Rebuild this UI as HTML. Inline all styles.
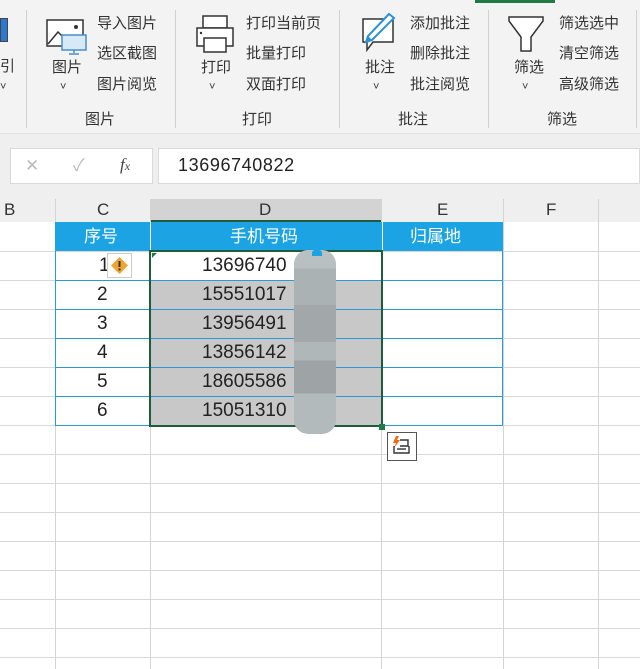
<!DOCTYPE html><html><head><meta charset="utf-8"><style>
*{margin:0;padding:0;box-sizing:border-box}
body{width:640px;height:669px;overflow:hidden;background:#fff;position:relative;font-family:"Liberation Sans","Noto Sans CJK SC",sans-serif;}
.a{position:absolute}
.t{position:absolute;font-size:15px;color:#333;white-space:nowrap;line-height:18px}
.sep{position:absolute;top:10px;width:1px;height:118px;background:#d0d0d0}
.vl{position:absolute;top:199px;bottom:0;width:1px;background:#d4d4d4}
.hl{position:absolute;left:0;right:0;height:1px;background:#d8d8d8}
.num{position:absolute;font-size:19px;color:#222;line-height:29px}
</style></head><body>
<div class="a" style="left:0;top:0;width:640px;height:133px;background:#f3f3f3"></div>
<div class="a" style="left:475px;top:0;width:80px;height:3px;background:#1e7b45"></div>
<div class="a" style="left:0;top:133px;width:640px;height:66px;background:#efefef;border-top:1px solid #e2e2e2"></div>
<div class="a" style="left:0;top:18px;width:8px;height:24px;background:#2b79d0;border:1px solid #444"></div>
<div class="t" style="left:0;top:58px">引</div>
<div class="t" style="left:0;top:78px;font-size:11px">˅</div>
<div class="sep" style="left:26px"></div>
<div class="sep" style="left:175px"></div>
<div class="sep" style="left:339px"></div>
<div class="sep" style="left:488px"></div>
<div class="sep" style="left:636px"></div>
<svg class="a" style="left:46px;top:18px" width="42" height="38"><rect x="1" y="2" width="36" height="26" fill="#fff" stroke="#333" stroke-width="1.5"/><path d="M2 26 L12 14 L20 22" fill="none" stroke="#333" stroke-width="1.5"/><circle cx="30" cy="9" r="2" fill="#333"/><rect x="16" y="17" width="24" height="15" fill="#d7e9f7" stroke="#4a8fc7" stroke-width="1.5"/><path d="M28 32v3M23 36h10" stroke="#4a8fc7" stroke-width="1.5"/></svg>
<div class="t" style="left:52px;top:59px">图片</div>
<div class="t" style="left:60px;top:78px;font-size:11px">˅</div>
<div class="t" style="left:97px;top:15px">导入图片</div>
<div class="t" style="left:97px;top:45px">选区截图</div>
<div class="t" style="left:97px;top:76px">图片阅览</div>
<div class="t" style="left:85px;top:111px">图片</div>
<svg class="a" style="left:195px;top:15px" width="40" height="40"><rect x="8" y="1" width="24" height="12" fill="#fff" stroke="#333" stroke-width="1.5"/><rect x="2" y="13" width="36" height="18" fill="#fff" stroke="#333" stroke-width="1.5"/><rect x="9" y="23" width="22" height="14" fill="#fff" stroke="#333" stroke-width="1.5"/><circle cx="6" cy="18" r="1.2" fill="#333"/></svg>
<div class="t" style="left:201px;top:59px">打印</div>
<div class="t" style="left:209px;top:78px;font-size:11px">˅</div>
<div class="t" style="left:246px;top:15px">打印当前页</div>
<div class="t" style="left:246px;top:45px">批量打印</div>
<div class="t" style="left:246px;top:76px">双面打印</div>
<div class="t" style="left:242px;top:111px">打印</div>
<svg class="a" style="left:357px;top:12px" width="42" height="40"><path d="M6 7 H36 V30 H16 L10 38 V30 H6 Z" fill="#fff" stroke="#333" stroke-width="1.5"/><path d="M32 2 L37 6 L15 28 L9 30 L11 24 Z" fill="#fff" stroke="#2d8fd6" stroke-width="2"/><path d="M9 30 L11 24 L15 28 Z" fill="#2d8fd6"/></svg>
<div class="t" style="left:365px;top:59px">批注</div>
<div class="t" style="left:373px;top:78px;font-size:11px">˅</div>
<div class="t" style="left:410px;top:15px">添加批注</div>
<div class="t" style="left:410px;top:45px">删除批注</div>
<div class="t" style="left:410px;top:76px">批注阅览</div>
<div class="t" style="left:398px;top:111px">批注</div>
<svg class="a" style="left:507px;top:15px" width="40" height="40"><path d="M2 2 H36 V6 L24 22 V36 H14 V22 L2 6 Z" fill="#fff" stroke="#333" stroke-width="1.5"/></svg>
<div class="t" style="left:514px;top:59px">筛选</div>
<div class="t" style="left:522px;top:78px;font-size:11px">˅</div>
<div class="t" style="left:559px;top:15px">筛选选中</div>
<div class="t" style="left:559px;top:45px">清空筛选</div>
<div class="t" style="left:559px;top:76px">高级筛选</div>
<div class="t" style="left:547px;top:111px">筛选</div>
<div class="a" style="left:10px;top:148px;width:143px;height:36px;background:#fff;border:1px solid #dadada"></div>
<div class="t" style="left:25px;top:157px;color:#bbb;font-size:17px">✕</div>
<div class="t" style="left:73px;top:157px;color:#bbb;font-size:17px">✓</div>
<div class="t" style="left:120px;top:156px;font-family:'Liberation Serif',serif;font-style:italic;font-size:17px;color:#444">f<span style="font-size:12px">x</span></div>
<div class="a" style="left:158px;top:148px;width:482px;height:36px;background:#fff;border:1px solid #dadada"></div>
<div class="t" style="left:178px;top:156px;font-size:18px;color:#222;letter-spacing:0.6px">13696740822</div>
<div class="a" style="left:0;top:199px;width:640px;height:23px;background:#efefef"></div>
<div class="a" style="left:150px;top:199px;width:232px;height:23px;background:#d3d3d3;border-bottom:2px solid #1f5c3c"></div>
<div class="t" style="left:4px;top:201px;font-size:17px;color:#333">B</div>
<div class="t" style="left:97px;top:201px;font-size:17px;color:#333">C</div>
<div class="t" style="left:259px;top:201px;font-size:17px;color:#333">D</div>
<div class="t" style="left:437px;top:201px;font-size:17px;color:#333">E</div>
<div class="t" style="left:546px;top:201px;font-size:17px;color:#333">F</div>
<div class="hl" style="top:280px"></div><div class="hl" style="top:309px"></div><div class="hl" style="top:338px"></div><div class="hl" style="top:367px"></div><div class="hl" style="top:396px"></div><div class="hl" style="top:425px"></div><div class="hl" style="top:454px"></div><div class="hl" style="top:483px"></div><div class="hl" style="top:512px"></div><div class="hl" style="top:541px"></div><div class="hl" style="top:570px"></div><div class="hl" style="top:599px"></div><div class="hl" style="top:628px"></div><div class="hl" style="top:657px"></div><div class="hl" style="top:251px"></div>
<div class="vl" style="left:55px"></div><div class="vl" style="left:150px"></div><div class="vl" style="left:381px"></div><div class="vl" style="left:503px"></div><div class="vl" style="left:598px"></div>
<div class="a" style="left:55px;top:222px;width:448px;height:29px;background:#1ba3e3"></div>
<div class="a" style="left:150px;top:222px;width:1px;height:29px;background:#fff"></div>
<div class="a" style="left:382px;top:222px;width:1px;height:29px;background:#fff"></div>
<div class="t" style="left:84px;top:228px;color:#fff;font-size:17px">序号</div>
<div class="t" style="left:230px;top:228px;color:#fff;font-size:17px">手机号码</div>
<div class="t" style="left:410px;top:228px;color:#fff;font-size:17px">归属地</div>
<div class="a" style="left:55px;top:251px;width:448px;height:175px;border:1px solid #2a9ad6;border-top:none"></div>
<div class="a" style="left:55px;top:280px;width:448px;height:1px;background:#2a9ad6"></div>
<div class="a" style="left:55px;top:309px;width:448px;height:1px;background:#2a9ad6"></div>
<div class="a" style="left:55px;top:338px;width:448px;height:1px;background:#2a9ad6"></div>
<div class="a" style="left:55px;top:367px;width:448px;height:1px;background:#2a9ad6"></div>
<div class="a" style="left:55px;top:396px;width:448px;height:1px;background:#2a9ad6"></div>
<div class="a" style="left:150px;top:251px;width:1px;height:175px;background:#2a9ad6"></div>
<div class="a" style="left:151px;top:281px;width:230px;height:144px;background:#c8c8c8"></div>
<div class="a" style="left:151px;top:309px;width:230px;height:1px;background:#2a9ad6"></div>
<div class="a" style="left:151px;top:338px;width:230px;height:1px;background:#2a9ad6"></div>
<div class="a" style="left:151px;top:367px;width:230px;height:1px;background:#2a9ad6"></div>
<div class="a" style="left:151px;top:396px;width:230px;height:1px;background:#2a9ad6"></div>
<div class="a" style="left:149px;top:250px;width:234px;height:177px;border:2px solid #1f5c3c"></div>
<div class="a" style="left:379px;top:424px;width:6px;height:6px;background:#1f7a4a"></div>
<div class="a" style="left:152px;top:253px;width:0;height:0;border-top:5px solid #1f7a4a;border-right:5px solid transparent"></div>
<div class="num" style="left:99px;top:251px">1</div>
<div class="num" style="left:97px;top:280px">2</div>
<div class="num" style="left:97px;top:309px">3</div>
<div class="num" style="left:97px;top:338px">4</div>
<div class="num" style="left:97px;top:367px">5</div>
<div class="num" style="left:97px;top:396px">6</div>
<div class="a" style="left:107px;top:253px;width:25px;height:25px;background:#fff;border:1px solid #ccc"></div>
<svg class="a" style="left:110px;top:256px" width="19" height="19"><path d="M9.5 1 L18 9.5 L9.5 18 L1 9.5 Z" fill="#f0a531"/><rect x="8.5" y="5" width="2" height="6" fill="#333"/><rect x="8.5" y="12.5" width="2" height="2" fill="#333"/></svg>
<div class="num" style="left:202px;top:251px">13696740</div>
<div class="num" style="left:202px;top:280px">15551017</div>
<div class="num" style="left:202px;top:309px">13956491</div>
<div class="num" style="left:202px;top:338px">13856142</div>
<div class="num" style="left:202px;top:367px">18605586</div>
<div class="num" style="left:202px;top:396px">15051310</div>
<div class="a" style="left:294px;top:250px;width:42px;height:184px;border-radius:14px;background:linear-gradient(#b8c0c2 0 10%,#aab2b4 10% 30%,#a2a8aa 30% 50%,#b0b7b9 50% 60%,#9ea3a5 60% 78%,#b3babb 78%);"></div>
<div class="a" style="left:312px;top:250px;width:10px;height:6px;background:#1ba3e3;border-radius:3px 3px 0 0"></div>
<div class="a" style="left:387px;top:432px;width:30px;height:29px;background:#fff;border:1px solid #555"></div>
<svg class="a" style="left:391px;top:435px" width="22" height="22"><path d="M5 1 L2 8 H5 L3 13 L9 5 H6 L8 1 Z" fill="#f06a1a"/><path d="M9 5H17V11H9 M3 11V18H18V11" fill="none" stroke="#333" stroke-width="1.4"/><path d="M6 14H15" stroke="#333" stroke-width="1.4"/></svg>
</body></html>
